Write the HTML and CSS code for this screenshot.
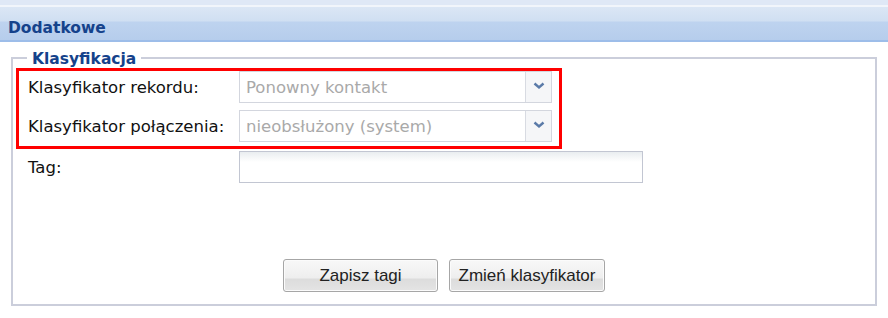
FILE: index.html
```html
<!DOCTYPE html>
<html lang="pl">
<head>
<meta charset="utf-8">
<title>Dodatkowe</title>
<link rel="stylesheet" href="styles.css">
</head>
<body>
<div class="panel">
  <div class="panel-header"><span class="panel-title">Dodatkowe</span></div>
  <div class="panel-body">
    <fieldset class="fs">
      <legend class="fs-legend">Klasyfikacja</legend>
      <div class="highlight">
        <div class="row">
          <label class="lbl">Klasyfikator rekordu:</label>
          <div class="combo">
            <span class="combo-value">Ponowny kontakt</span>
            <span class="combo-trigger">
              <svg width="12" height="8" viewBox="0 0 12 8"><path d="M1.5 1.5 L6 5.5 L10.5 1.5" fill="none" stroke="#5a7aa8" stroke-width="2.4"/></svg>
            </span>
          </div>
        </div>
        <div class="row">
          <label class="lbl">Klasyfikator połączenia:</label>
          <div class="combo">
            <span class="combo-value">nieobsłużony (system)</span>
            <span class="combo-trigger">
              <svg width="12" height="8" viewBox="0 0 12 8"><path d="M1.5 1.5 L6 5.5 L10.5 1.5" fill="none" stroke="#5a7aa8" stroke-width="2.4"/></svg>
            </span>
          </div>
        </div>
      </div>
      <div class="row tag-row">
        <label class="lbl lbl-tag">Tag:</label>
        <div class="text-input"></div>
      </div>
      <div class="buttons">
        <button class="btn btn-save">Zapisz tagi</button>
        <button class="btn btn-change">Zmień klasyfikator</button>
      </div>
    </fieldset>
  </div>
</div>
</body>
</html>
```

FILE: styles.css
```css
html, body {
  margin: 0;
  padding: 0;
  background: #ffffff;
}

.panel {
  width: 888px;
  font-family: "DejaVu Sans", Verdana, sans-serif;
}

.panel-header {
  height: 42px;
  box-sizing: border-box;
  padding: 15px 0 0 8px;
  display: flex;
  align-items: center;
  border-bottom: 2px solid #9dbde9;
  background: linear-gradient(to bottom,
    #dfe8f6 0px, #dfe8f6 5px,
    #f1f5fb 5px, #f1f5fb 7px,
    #dbe6f5 7px, #d0dff2 21px,
    #bed3ef 22px, #b6cdec 40px);
}

.panel-title {
  font-weight: bold;
  font-size: 15.5px;
  color: #15428b;
}

.panel-body {
  padding-top: 6px;
}

.fs {
  margin: 0 11px;
  padding: 0 0 12px 0;
  border: 2px solid #cbcedb;
  min-width: 0;
}

.fs-legend {
  margin-left: 14px;
  padding: 3px 5px 0 5px;
  font-weight: bold;
  font-size: 15.5px;
  line-height: 17px;
  color: #15428b;
}

.highlight {
  margin: 0 0 0 3px;
  width: 540px;
  border: 3px solid #ff0000;
  padding: 0 0 4px 0;
  display: flex;
  flex-direction: column;
  gap: 7px;
}

.row {
  display: flex;
  align-items: center;
}

.lbl {
  width: 211px;
  padding-left: 9px;
  font-size: 16.5px;
  color: #111;
  white-space: nowrap;
}

.combo {
  width: 313px;
  height: 32px;
  box-sizing: border-box;
  border: 1px solid #d3d6de;
  display: flex;
  background: #ffffff;
}

.combo-value {
  flex: 1;
  padding-left: 6px;
  display: flex;
  align-items: center;
  font-size: 16.5px;
  color: #a9a9a9;
  white-space: nowrap;
}

.combo-trigger {
  width: 26px;
  border-left: 1px solid #d8dbe2;
  background: #f5f6f8;
  display: flex;
  justify-content: center;
  align-items: flex-start;
  padding-top: 10px;
  box-sizing: border-box;
}

.tag-row {
  margin-top: 2px;
}

.lbl-tag {
  width: 211px;
  padding-left: 15px;
}

.text-input {
  width: 404px;
  height: 32px;
  box-sizing: border-box;
  border: 1px solid #c2c6d2;
  background: linear-gradient(to bottom, #e9edf0 0px, #ffffff 10px);
}

.buttons {
  margin-top: 76px;
  display: flex;
  justify-content: center;
  gap: 11px;
}

.btn {
  height: 33px;
  box-sizing: border-box;
  border: 1px solid #a6a6a6;
  border-radius: 3px;
  font-family: "Liberation Sans", Arial, sans-serif;
  font-size: 17px;
  color: #222;
  padding: 0;
  background: linear-gradient(to bottom,
    #f8f8f8 0px, #eeeeee 18px,
    #dcdcdc 19px, #e4e4e4 31px);
  box-shadow: inset 0 0 0 1px #fbfbfb;
}

.btn-save {
  width: 155px;
}

.btn-change {
  width: 156px;
}
```
